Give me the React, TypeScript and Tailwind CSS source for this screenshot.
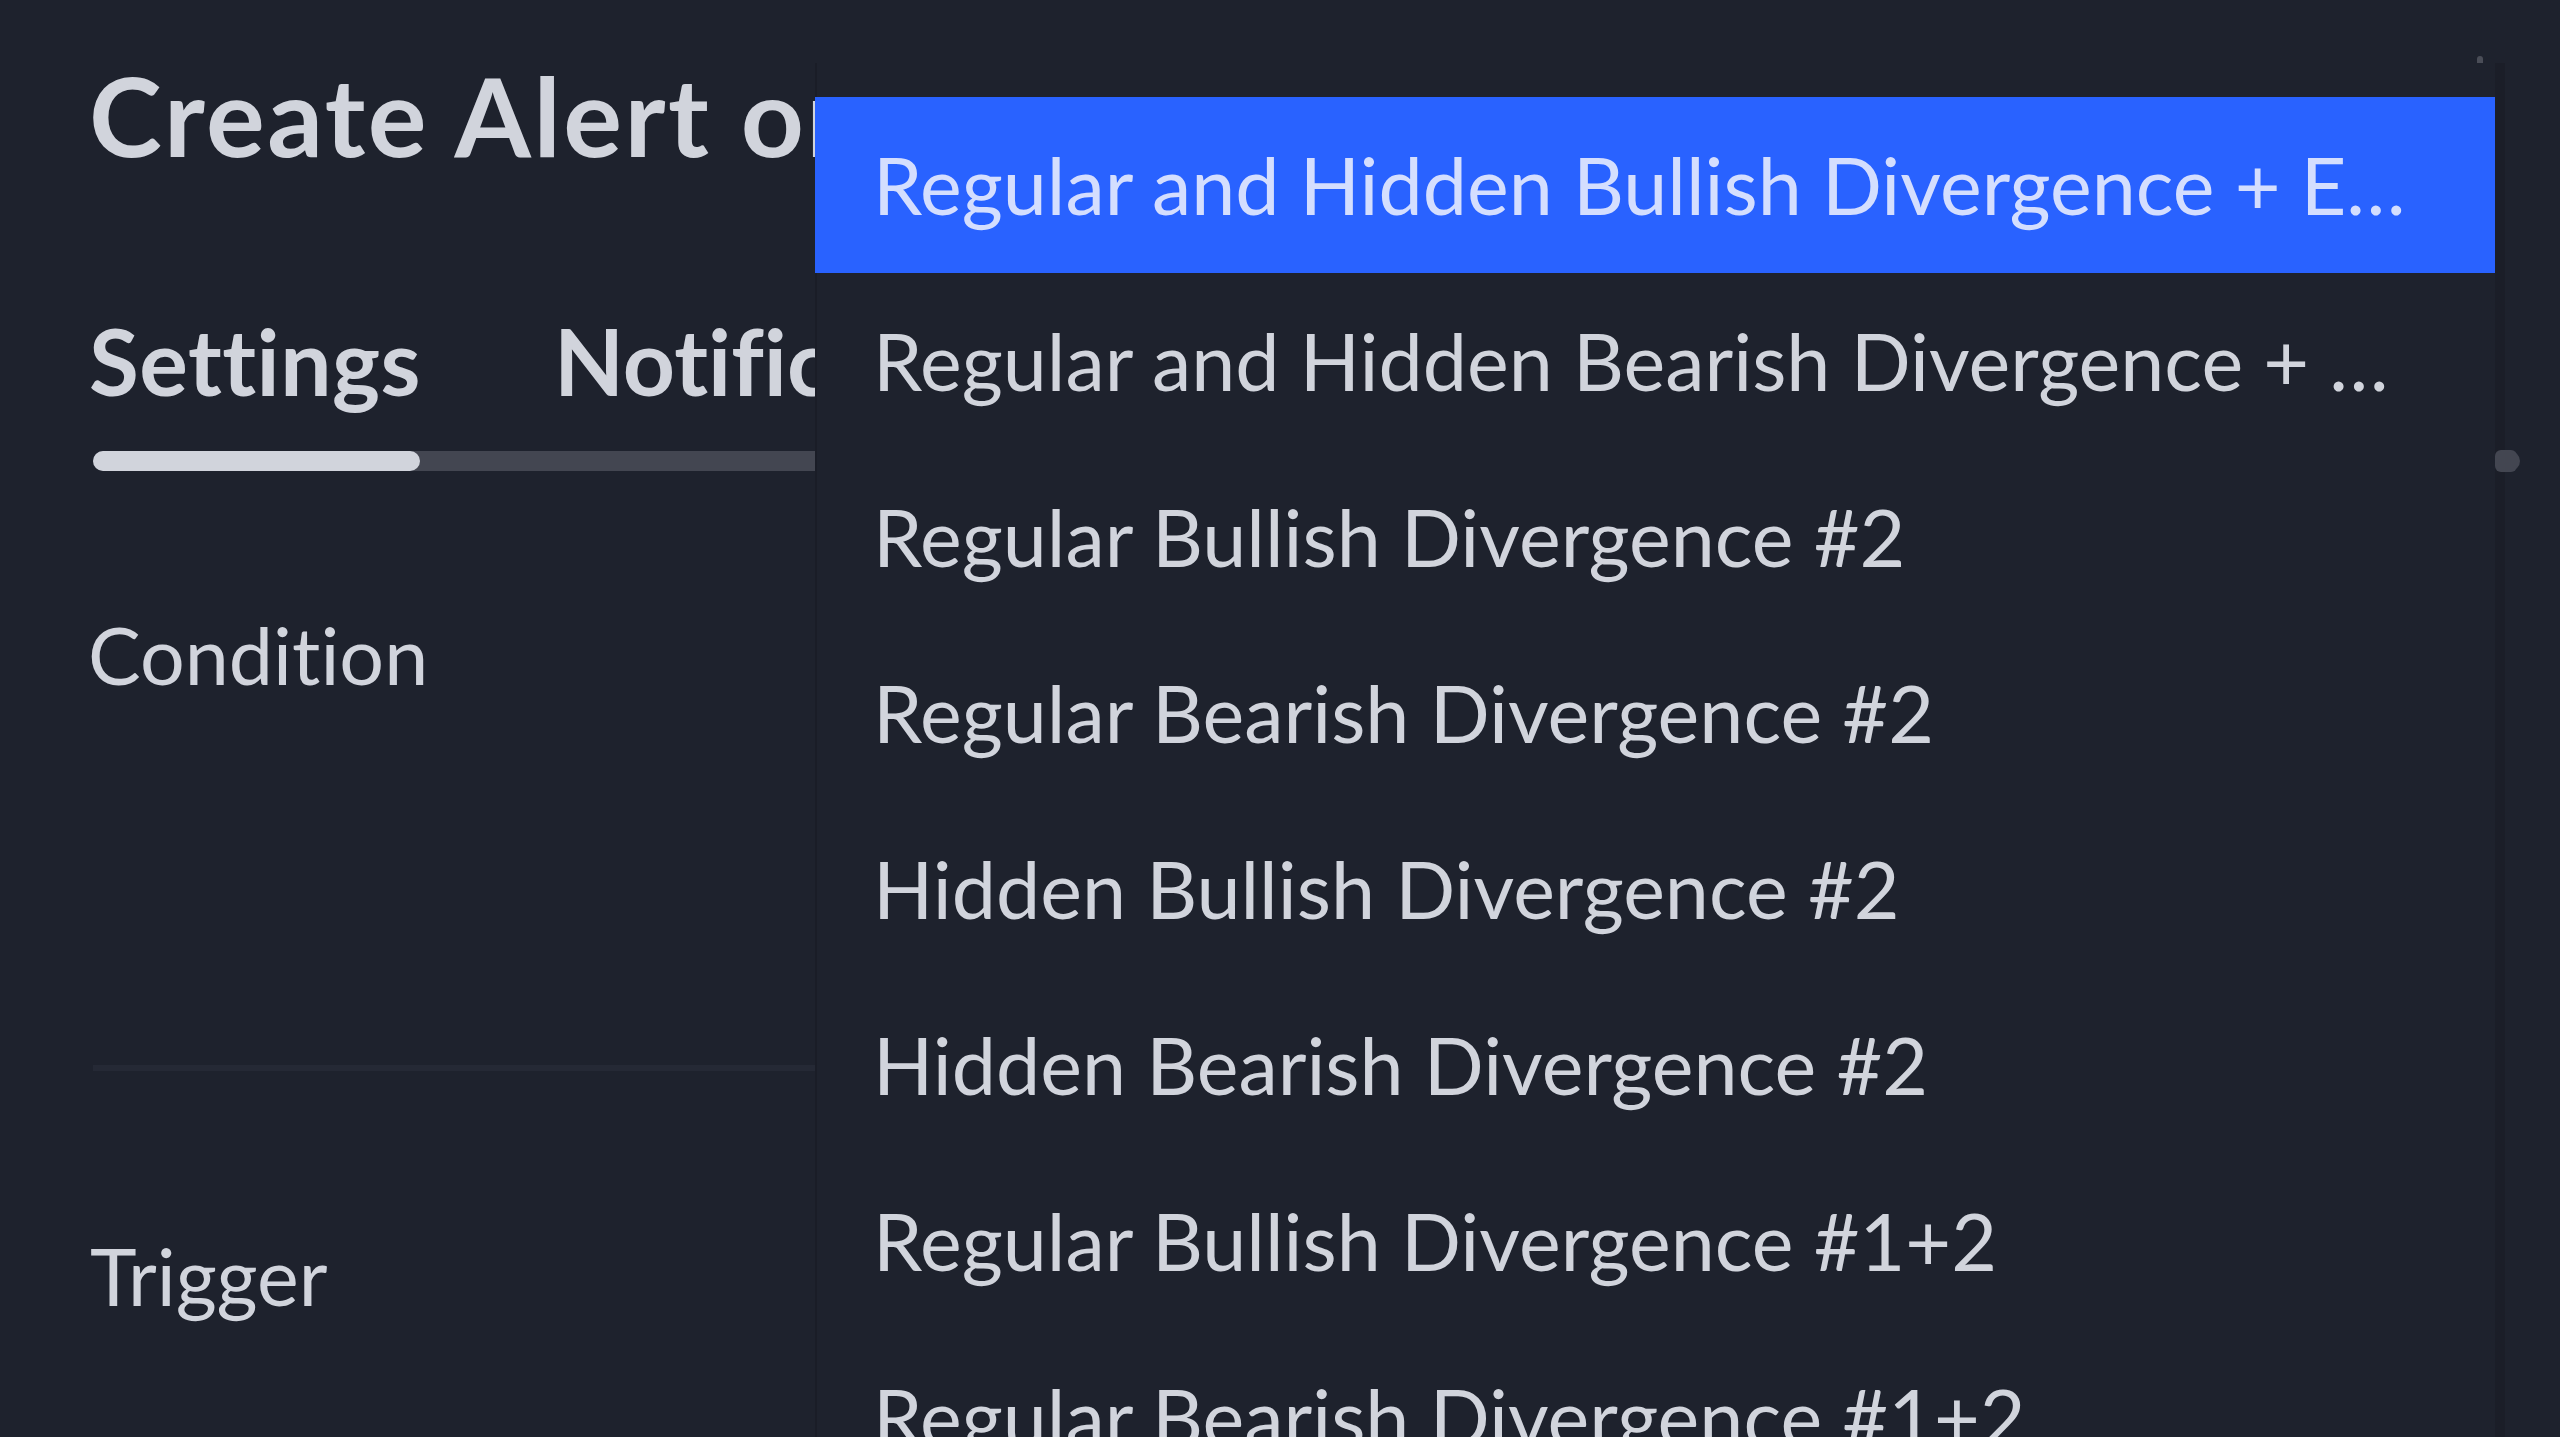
import React from "react";

const items = [
  "Regular and Hidden Bullish Divergence + E…",
  "Regular and Hidden Bearish Divergence + …",
  "Regular Bullish Divergence #2",
  "Regular Bearish Divergence #2",
  "Hidden Bullish Divergence #2",
  "Hidden Bearish Divergence #2",
  "Regular Bullish Divergence #1+2",
  "Regular Bearish Divergence #1+2",
];

export default function App() {
  return (
    <div
      className="relative w-[2560px] h-[1437px] overflow-hidden bg-[#1e222d] text-[#d1d4dc] [font-variant-ligatures:none]"
      style={{ fontFamily: "Lato, 'Open Sans', 'Noto Sans', sans-serif" }}
    >
      {/* Dialog content */}
      <div className="flex flex-col pl-[93px] pr-[40px]">
        <div className="h-[236px] flex items-center pb-[8px]">
          <h1 className="-ml-[4px] text-[110px] font-bold leading-[1.2] tracking-[2.5px] whitespace-nowrap text-[#d1d4dc]">
            Create Alert on RSI Divergence
          </h1>
        </div>

        <div className="mt-[35px] h-[180px] flex items-center gap-[133px]">
          <span className="-ml-[4px] text-[91px] font-bold leading-[1.2] tracking-[0.5px] whitespace-nowrap text-[#d1d4dc]">
            Settings
          </span>
          <span className="text-[91px] font-bold leading-[1.2] whitespace-nowrap text-[#d1d4dc]">
            Notifications
          </span>
        </div>
        <div className="h-[20px] rounded-full bg-[#434651] flex">
          <div className="w-[327px] h-full rounded-full bg-[#d1d4dc]" />
        </div>

        <div className="h-[368px] flex items-center">
          <span className="-ml-[5px] text-[79px] leading-[1.2] whitespace-nowrap">Condition</span>
        </div>

        <div className="mt-[226px] mr-[160px] h-[6px] bg-[#252935]" />

        <div className="h-[410px] flex items-center">
          <span className="-ml-[3px] text-[79px] leading-[1.2] whitespace-nowrap">Trigger</span>
        </div>
      </div>

      {/* faint close-button remnant */}
      <div className="absolute left-[2477px] top-[56px] w-[6px] h-[12px] rounded-full bg-[#4a4d57]" />

      {/* Dropdown menu */}
      <div className="absolute left-[815px] top-[63px] w-[1690px] h-[1400px] bg-[#1e222d] pt-[34px] border-l-2 border-r-[10px] border-l-[#1a1d27] border-r-[#1b1e28] z-10">
        {items.map((t, i) => (
          <div
            key={t}
            className={
              i === 0
                ? "h-[176px] -ml-[2px] flex items-center pl-[58px] pr-[40px] bg-[#2962ff] text-[#d4defe]"
                : "h-[176px] flex items-center pl-[56px] pr-[40px] text-[#d1d4dc]"
            }
          >
            <span className="text-[79px] leading-[1.2] whitespace-nowrap">{t}</span>
          </div>
        ))}
      </div>

      {/* scrollbar thumb peeking at the right edge */}
      <div className="absolute left-[2495px] top-[450px] w-[22px] h-[22px] rounded-[6px] bg-[#434651] z-20" />
    </div>
  );
}
